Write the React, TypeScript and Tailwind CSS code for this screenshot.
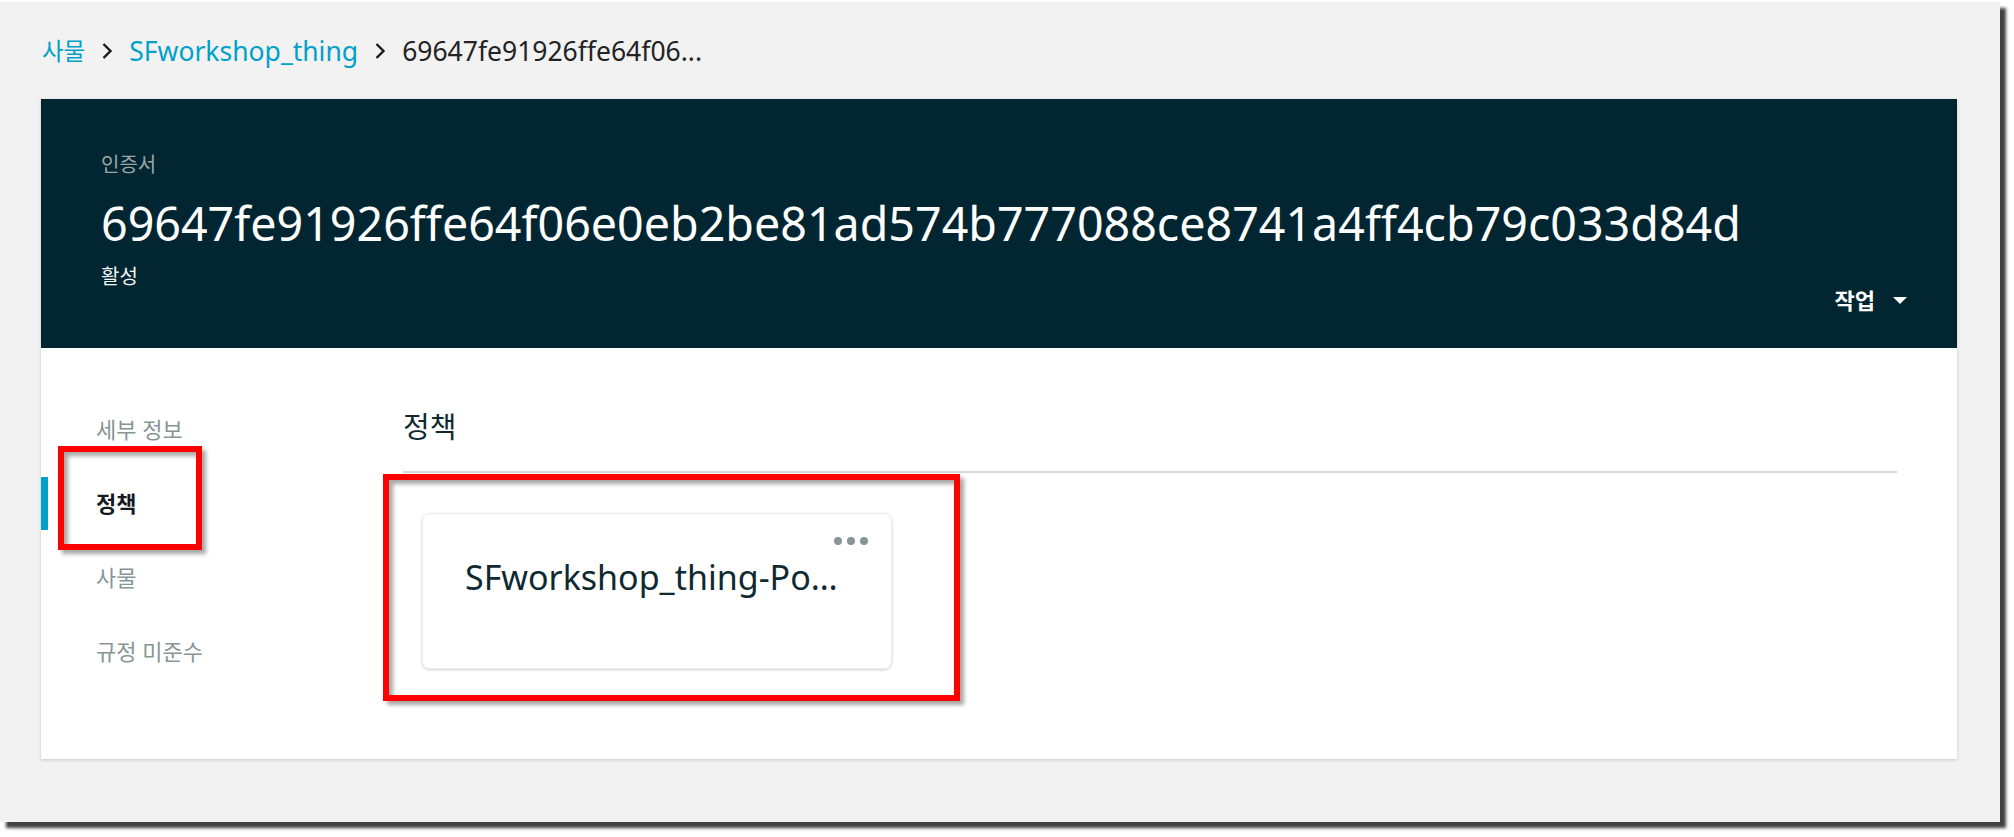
import React from "react";

const navItems = [
  { label: "세부 정보", active: false },
  { label: "정책", active: true },
  { label: "사물", active: false },
  { label: "규정 미준수", active: false },
];

const Chevron = () => (
  <svg width="12" height="18" viewBox="0 0 12 18" className="mx-[16px]">
    <path d="M2.5 2 L9.5 9 L2.5 16" fill="none" stroke="#16191f" strokeWidth="2.4" />
  </svg>
);

const App = () => {
  return (
    <div className="w-[2014px] h-[837px] bg-white pt-[2px] font-['Noto_Sans','Noto_Sans_CJK_KR',sans-serif]">
      <div className="w-[2000px] h-[820px] bg-[#f2f2f2] shadow-[6px_6px_3px_rgba(0,0,0,0.75)] pt-[31px]">
        {/* breadcrumb */}
        <div className="flex items-center h-[36px] pl-[42px] text-[26.5px] leading-[36px]">
          <span className="text-[23.5px] text-[#00a1c9]">사물</span>
          <Chevron />
          <span className="text-[#00a1c9]">SFworkshop_thing</span>
          <Chevron />
          <span className="text-[#232323]">69647fe91926ffe64f06...</span>
        </div>

        <div className="ml-[41px] mt-[30px] w-[1916px] shadow-[0_1px_3px_rgba(0,0,0,0.18)]">
          {/* header */}
          <div className="h-[249px] bg-[#012631] flex justify-between pl-[60px] pr-[50px] pt-[52px]">
            <div className="flex flex-col">
              <p className="text-[20px] leading-[28px] text-[#9aa5a7]">인증서</p>
              <h1 className="mt-[16px] text-[46.6px] leading-[56px] text-white">
                69647fe91926ffe64f06e0eb2be81ad574b777088ce8741a4ff4cb79c033d84d
              </h1>
              <p className="mt-[12px] text-[20px] leading-[28px] text-[#f2f3f3]">활성</p>
            </div>
            <div className="self-end mb-[34px] flex items-center gap-[18px] text-white">
              <span className="text-[22px] leading-[28px] font-bold">작업</span>
              <svg width="14" height="7" viewBox="0 0 14 7">
                <path d="M0 0 L14 0 L7 7 Z" fill="#ffffff" />
              </svg>
            </div>
          </div>

          {/* content */}
          <div className="relative h-[411px] bg-white flex">
            <div className="w-[362px] pt-[44px] flex flex-col">
              {navItems.map((item) => (
                <div key={item.label} className="h-[74px] flex items-center">
                  <div className={item.active ? "w-[7px] h-[53px] bg-[#00a1c9]" : "w-[7px] h-[53px]"} />
                  <span
                    className={
                      item.active
                        ? "ml-[48px] text-[22px] font-bold text-[#16191f]"
                        : "ml-[48px] text-[22px] text-[#879596]"
                    }
                  >
                    {item.label}
                  </span>
                </div>
              ))}
            </div>

            <div className="flex-1 pr-[60px] pt-[59px]">
              <h2 className="text-[29px] leading-[40px] text-[#0f2931]">정책</h2>
              <div className="mt-[24px] h-[2px] bg-[#d5dbdb]" />
              <div className="mt-[40px] ml-[19px] w-[470px] h-[156px] rounded-[8px] border border-[#eaeded] shadow-[0_1px_3px_rgba(0,0,0,0.2)] flex flex-col">
                <div className="flex justify-end pt-[23px] pr-[23px] gap-[5px]">
                  <span className="w-[8px] h-[8px] rounded-full bg-[#879596]" />
                  <span className="w-[8px] h-[8px] rounded-full bg-[#879596]" />
                  <span className="w-[8px] h-[8px] rounded-full bg-[#879596]" />
                </div>
                <p className="mt-[11px] pl-[42px] text-[34px] leading-[42px] text-[#0f2931] whitespace-nowrap">
                  SFworkshop_thing-Po…
                </p>
              </div>
            </div>

            {/* annotation boxes */}
            <div className="absolute left-[17px] top-[98px] w-[144px] h-[104px] border-[6px] border-[#ff0000] shadow-[4px_4px_4px_rgba(0,0,0,0.35),inset_4px_4px_4px_rgba(0,0,0,0.35)]" />
            <div className="absolute left-[342px] top-[126px] w-[577px] h-[227px] border-[6px] border-[#ff0000] shadow-[4px_4px_4px_rgba(0,0,0,0.35),inset_4px_4px_4px_rgba(0,0,0,0.35)]" />
          </div>
        </div>
      </div>
    </div>
  );
};

export default App;
